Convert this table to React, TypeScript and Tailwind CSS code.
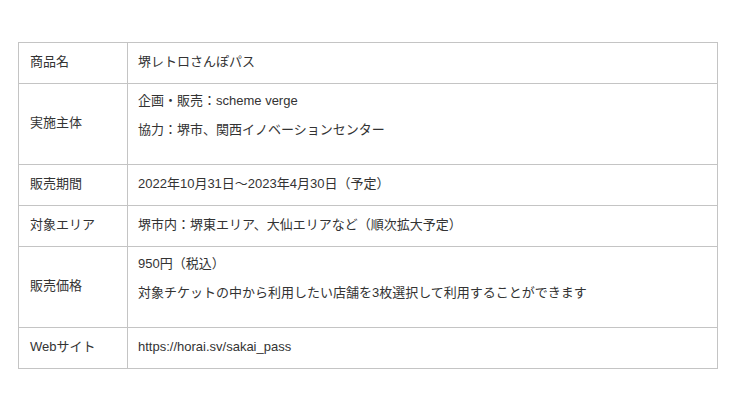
const rows: { label: string; lines: string[] }[] = [
  { label: "商品名", lines: ["堺レトロさんぽパス"] },
  {
    label: "実施主体",
    lines: ["企画・販売：scheme verge", "協力：堺市、関西イノベーションセンター"],
  },
  { label: "販売期間", lines: ["2022年10月31日～2023年4月30日（予定）"] },
  { label: "対象エリア", lines: ["堺市内：堺東エリア、大仙エリアなど（順次拡大予定）"] },
  {
    label: "販売価格",
    lines: ["950円（税込）", "対象チケットの中から利用したい店舗を3枚選択して利用することができます"],
  },
  { label: "Webサイト", lines: ["https://horai.sv/sakai_pass"] },
];

export default function App() {
  return (
    <div
      className="h-[409px] w-[740px] bg-white pl-[18px] pt-[42px] text-[13px] text-[#333] [text-spacing-trim:space-all]"
      style={{ fontFamily: '"Liberation Sans", "Noto Sans CJK JP", sans-serif' }}
    >
      <div className="grid w-[700px] grid-cols-[109px_1fr] border-l border-t border-[#c4c4c4]">
        {rows.map((row) => (
          <div key={row.label} className="contents">
            <div className="flex items-center border-b border-r border-[#c4c4c4] pb-[2px] pl-[11px] leading-[18px]">
              {row.label}
            </div>
            {row.lines.length === 1 ? (
              <div className="border-b border-r border-[#c4c4c4] pb-[12px] pl-[10px] pt-[10px] leading-[18px]">
                {row.lines[0]}
              </div>
            ) : (
              <div className="border-b border-r border-[#c4c4c4] pb-[25px] pl-[10px] pt-[8px] leading-[18px]">
                {row.lines.map((line, i) => (
                  <p key={line} className={i > 0 ? "mt-[11px]" : ""}>
                    {line}
                  </p>
                ))}
              </div>
            )}
          </div>
        ))}
      </div>
    </div>
  );
}
